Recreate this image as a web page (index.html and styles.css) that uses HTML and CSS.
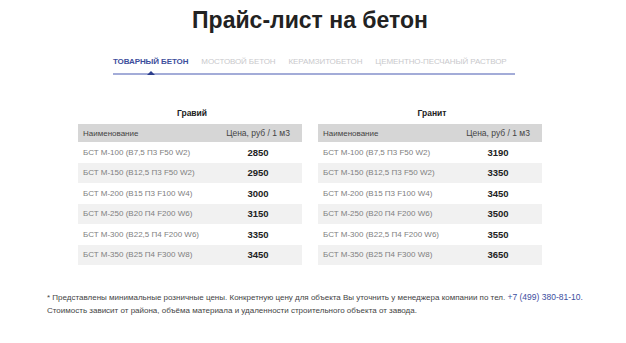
FILE: index.html
```html
<!DOCTYPE html>
<html lang="ru">
<head>
<meta charset="utf-8">
<link rel="stylesheet" href="styles.css">
</head>
<body>
<div class="page">
  <h1 class="title">Прайс-лист на бетон</h1>
  <nav class="tabs">
    <span class="tab active">Товарный бетон</span>
    <span class="tab">Мостовой бетон</span>
    <span class="tab">Керамзитобетон</span>
    <span class="tab">Цементно-песчаный раствор</span>
  </nav>
  <div class="tables">
    <div class="block">
      <div class="block-title">Гравий</div>
      <table class="price">
        <tr class="head"><td class="name">Наименование</td><td class="cost">Цена, руб / 1 м3</td></tr>
        <tr><td class="name">БСТ М-100 (В7,5 П3 F50 W2)</td><td class="cost val">2850</td></tr>
        <tr class="alt"><td class="name">БСТ М-150 (В12,5 П3 F50 W2)</td><td class="cost val">2950</td></tr>
        <tr><td class="name">БСТ М-200 (В15 П3 F100 W4)</td><td class="cost val">3000</td></tr>
        <tr class="alt"><td class="name">БСТ М-250 (В20 П4 F200 W6)</td><td class="cost val">3150</td></tr>
        <tr><td class="name">БСТ М-300 (В22,5 П4 F200 W6)</td><td class="cost val">3350</td></tr>
        <tr class="alt"><td class="name">БСТ М-350 (В25 П4 F300 W8)</td><td class="cost val">3450</td></tr>
      </table>
    </div>
    <div class="block">
      <div class="block-title">Гранит</div>
      <table class="price">
        <tr class="head"><td class="name">Наименование</td><td class="cost">Цена, руб / 1 м3</td></tr>
        <tr><td class="name">БСТ М-100 (В7,5 П3 F50 W2)</td><td class="cost val">3190</td></tr>
        <tr class="alt"><td class="name">БСТ М-150 (В12,5 П3 F50 W2)</td><td class="cost val">3350</td></tr>
        <tr><td class="name">БСТ М-200 (В15 П3 F100 W4)</td><td class="cost val">3450</td></tr>
        <tr class="alt"><td class="name">БСТ М-250 (В20 П4 F200 W6)</td><td class="cost val">3500</td></tr>
        <tr><td class="name">БСТ М-300 (В22,5 П4 F200 W6)</td><td class="cost val">3550</td></tr>
        <tr class="alt"><td class="name">БСТ М-350 (В25 П4 F300 W8)</td><td class="cost val">3650</td></tr>
      </table>
    </div>
  </div>
  <p class="note">* Представлены минимальные розничные цены. Конкретную цену для объекта Вы уточнить у менеджера компании по тел. <span class="phone">+7 (499) 380-81-10.</span><br>Стоимость зависит от района, объёма материала и удаленности строительного объекта от завода.</p>
</div>
</body>
</html>
```

FILE: styles.css
```css
html, body {
  margin: 0;
  padding: 0;
  background: #ffffff;
}
body {
  font-family: "Liberation Sans", Arial, sans-serif;
  color: #333;
}
.page {
  width: 626px;
  padding-top: 7px;
}
.title {
  margin: 0 0 0 -6px;
  text-align: center;
  font-size: 23px;
  line-height: 26px;
  font-weight: bold;
  color: #222;
}
.tabs {
  margin: 24px 0 0 113px;
  width: 402px;
  display: flex;
  gap: 13px;
  border-bottom: 2px solid #a3acd8;
  padding-bottom: 6px;
}
.tab {
  position: relative;
  font-size: 8px;
  line-height: 10px;
  text-transform: uppercase;
  color: #c9c9cc;
  letter-spacing: -0.1px;
}
.tab.active {
  color: #3d4e9c;
  font-weight: bold;
}
.tab.active::after {
  content: "";
  position: absolute;
  left: 50%;
  bottom: -8px;
  margin-left: -4px;
  border-left: 4px solid transparent;
  border-right: 4px solid transparent;
  border-bottom: 4px solid #2c3e8c;
}
.tables {
  display: flex;
  gap: 16px;
  margin: 33px 0 0 78px;
}
.block {
  width: 224px;
}
.block-title {
  text-align: center;
  font-size: 8.5px;
  font-weight: bold;
  color: #222;
  line-height: 11px;
  margin-bottom: 5px;
  padding-left: 4px;
}
.price {
  width: 224px;
  border-collapse: collapse;
  font-size: 8px;
}
.price td {
  height: 20.5px;
  padding: 0;
}
.price tr.head td {
  height: 18px;
  background: #d6d6d6;
  color: #444;
}
.price tr.alt td {
  background: #f1f1f1;
}
.price .name {
  padding-left: 5px;
  color: #808080;
}
.price tr.head .name {
  color: #444;
}
.price .cost {
  width: 88px;
  text-align: center;
}
.price tr.head .cost {
  font-size: 8.5px;
}
.price .val {
  font-size: 9.5px;
  font-weight: bold;
  color: #222;
}
.note {
  margin: 26px 0 0 47px;
  font-size: 8px;
  line-height: 13px;
  color: #444;
}
.phone {
  color: #3d4ea0;
  font-size: 8.5px;
}
```
